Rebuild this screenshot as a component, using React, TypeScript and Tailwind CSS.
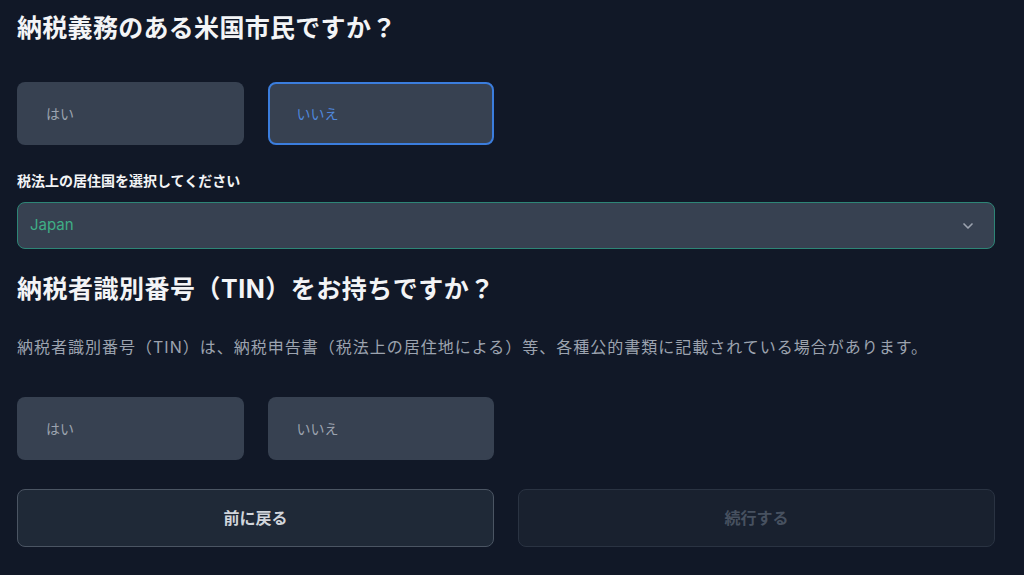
import { ChevronDown } from "lucide-react";

const font = { fontFamily: "Inter, 'Noto Sans CJK JP', sans-serif" };

function Choice({ label, selected }: { label: string; selected?: boolean }) {
  return (
    <button
      className={
        selected
          ? "h-[63px] rounded-lg border-2 border-[#3b7ddd] bg-[#374151] pl-[27px] text-left text-[14px] text-[#4f87dc]"
          : "h-[63px] rounded-lg border-2 border-transparent bg-[#374151] pl-[27px] text-left text-[14px] text-[#9ca3af]"
      }
    >
      {label}
    </button>
  );
}

export default function App() {
  return (
    <div className="min-h-[575px] w-full bg-[#111827] pl-[17px] pt-[12px]" style={font}>
      <div className="w-[978px]">
        <h1 className="text-[25px] font-bold leading-[32px] tracking-[0.3px] text-[#f3f4f6]">
          納税義務のある米国市民ですか？
        </h1>

        <div className="mt-[38px] grid grid-cols-4 gap-6">
          <Choice label="はい" />
          <Choice label="いいえ" selected />
        </div>

        <label className="mt-[26px] block text-[14px] font-bold leading-[20px] text-[#f3f4f6]">
          税法上の居住国を選択してください
        </label>
        <div className="mt-[11px] flex h-[47px] items-center justify-between rounded-lg border border-[#2d8576] bg-[#374151] pl-[12px] pr-[18px]">
          <span className="text-[15px] text-[#3fae86]">Japan</span>
          <ChevronDown className="h-[16px] w-[16px] text-[#9ca3af]" strokeWidth={2.5} />
        </div>

        <h2 className="mt-[24px] text-[25px] font-bold leading-[32px] tracking-[0.5px] text-[#f3f4f6]">
          納税者識別番号（TIN）をお持ちですか？
        </h2>

        <p className="mt-[30px] text-[16px] leading-[24px] tracking-[1px] text-[#9ca3af]">
          納税者識別番号（TIN）は、納税申告書（税法上の居住地による）等、各種公的書類に記載されている場合があります。
        </p>

        <div className="mt-[38px] grid grid-cols-4 gap-6">
          <Choice label="はい" />
          <Choice label="いいえ" />
        </div>

        <div className="mt-[29px] grid grid-cols-2 gap-6">
          <button className="h-[58px] rounded-lg border border-[#4b5563] bg-[#1f2937] text-[16px] font-semibold text-[#d1d5db]">
            前に戻る
          </button>
          <button
            disabled
            className="h-[58px] rounded-lg border border-[#2a3342] bg-[#19212f] text-[16px] font-semibold text-[#475160]"
          >
            続行する
          </button>
        </div>
      </div>
    </div>
  );
}
